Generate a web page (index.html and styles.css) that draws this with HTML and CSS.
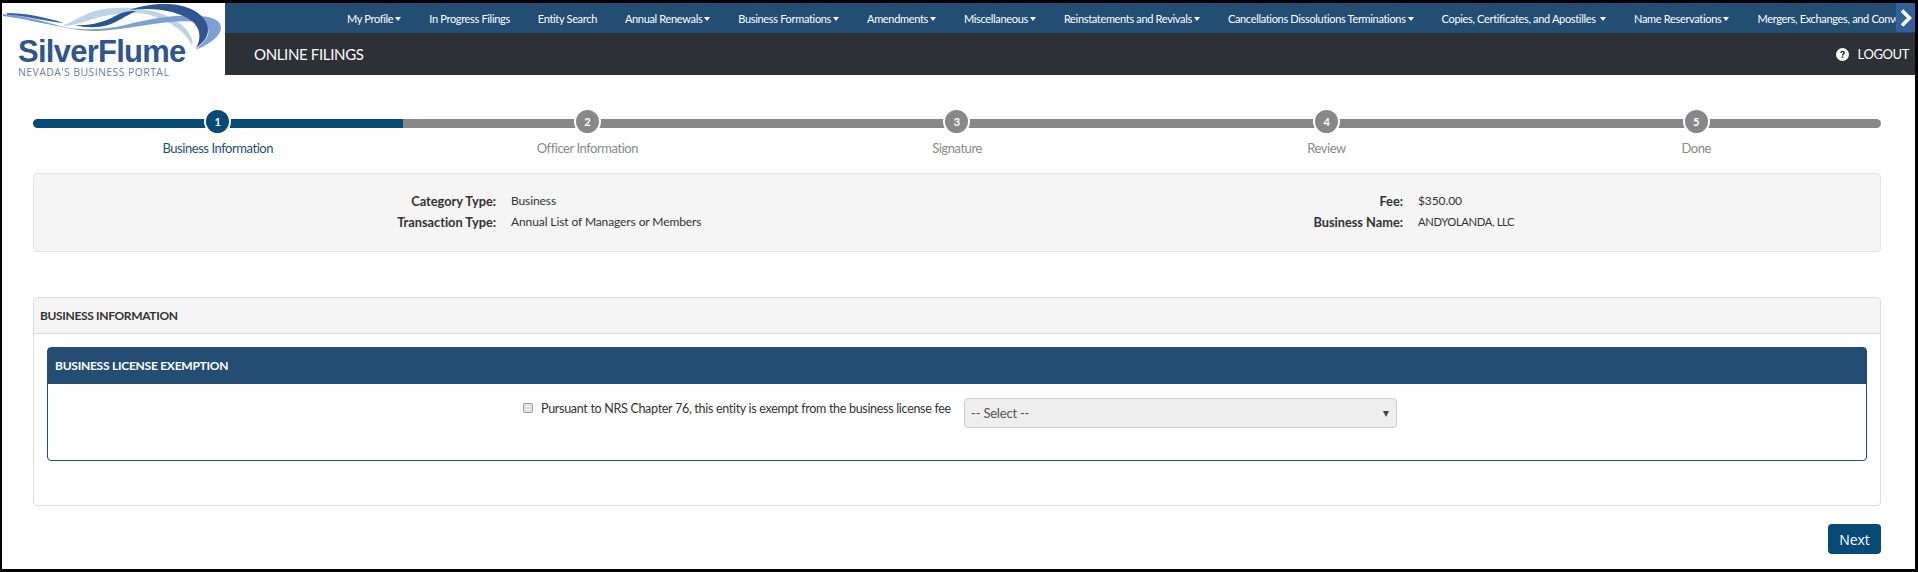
FILE: index.html
```html
<!DOCTYPE html>
<html lang="en">
<head>
<meta charset="utf-8">
<title>SilverFlume - Online Filings</title>
<link rel="stylesheet" href="styles.css">
</head>
<body>
<div class="page">
  <header class="top">
    <div class="logo">
      <svg class="swoosh" viewBox="2 3 223 50" width="223" height="50" aria-hidden="true">
        <path d="M62 26C78 20 88 9 115 8C140 6 170 12 185 28C191 35 194 41 192 46C186 32 172 22 150 15C130 10 115 14 100 17C88 20 75 26 62 26Z" fill="#bfd3e6"/>
        <path d="M3 14C20 15 40 20 60 26C75 30 100 31 125 25C150 19 175 14 200 16C215 17 224 22 220 32C216 40 205 46 195 50C205 42 210 35 208 29C205 22 190 20 170 22C140 25 115 31 95 31C70 31 45 22 3 16Z" fill="#7d9fd3"/>
        <path d="M7 13C25 13 45 17 64 23C50 22 25 16 7 14.5Z" fill="#3b629f"/>
        <path d="M75 25C90 26 105 22 115 16C122 12 128 11 136 11C125 16 118 22 108 25C98 28 85 28 75 25Z" fill="#2a5594"/>
        <path d="M130 10C145 4 165 3 178 5C195 8 208 18 208 30C208 37 203 43 196 48C202 38 200 28 192 21C178 11 155 7 130 10Z" fill="#2f5593"/>
      </svg>
      <div class="brand">SilverFlume</div>
      <div class="tagline">NEVADA'S BUSINESS PORTAL</div>
    </div>
    <div class="bars">
      <nav class="nav">
        <a>My Profile<i class="caret"></i></a>
        <a>In Progress Filings</a>
        <a>Entity Search</a>
        <a>Annual Renewals<i class="caret"></i></a>
        <a>Business Formations<i class="caret"></i></a>
        <a>Amendments<i class="caret"></i></a>
        <a>Miscellaneous<i class="caret"></i></a>
        <a>Reinstatements and Revivals<i class="caret"></i></a>
        <a>Cancellations Dissolutions Terminations<i class="caret"></i></a>
        <a>Copies, Certificates, and Apostilles <i class="caret"></i></a>
        <a>Name Reservations<i class="caret"></i></a>
        <a>Mergers, Exchanges, and Conversions<i class="caret"></i></a>
        <span class="more"><svg viewBox="0 0 12 18" width="12" height="18" aria-hidden="true"><path d="M2 1.5L9.5 9L2 16.5" fill="none" stroke="#fff" stroke-width="3.6"/></svg></span>
      </nav>
      <div class="subbar">
        <span class="title">ONLINE FILINGS</span>
        <span class="logout"><svg viewBox="0 0 14 14" width="13" height="13" aria-hidden="true"><circle cx="7" cy="7" r="7" fill="#fff"/><path d="M4.6 5.4C4.7 3.9 5.7 3 7.1 3C8.6 3 9.6 3.9 9.6 5.1C9.6 6.6 7.9 6.8 7.9 8.2H6.2C6.2 6.2 7.8 6 7.8 5.2C7.8 4.7 7.5 4.4 7 4.4C6.5 4.4 6.2 4.8 6.1 5.4Z" fill="#2d3035"/><rect x="6.2" y="9" width="1.7" height="1.7" fill="#2d3035"/></svg>LOGOUT</span>
      </div>
    </div>
  </header>

  <main class="main">
    <ol class="steps">
      <li class="step active"><span class="dot">1</span><span class="step-label">Business Information</span></li>
      <li class="step"><span class="dot">2</span><span class="step-label">Officer Information</span></li>
      <li class="step"><span class="dot">3</span><span class="step-label">Signature</span></li>
      <li class="step"><span class="dot">4</span><span class="step-label">Review</span></li>
      <li class="step"><span class="dot">5</span><span class="step-label">Done</span></li>
    </ol>

    <section class="summary">
      <div class="k">Category Type:</div><div class="v">Business</div>
      <div class="k">Fee:</div><div class="v">$350.00</div>
      <div class="k">Transaction Type:</div><div class="v">Annual List of Managers or Members</div>
      <div class="k">Business Name:</div><div class="v v-caps">ANDYOLANDA, LLC</div>
    </section>

    <section class="panel">
      <h2 class="panel-head">BUSINESS INFORMATION</h2>
      <div class="panel-body">
        <div class="inner">
          <h3 class="inner-head">BUSINESS LICENSE EXEMPTION</h3>
          <div class="inner-body">
            <label class="check"><input type="checkbox" class="box">Pursuant to NRS Chapter 76, this entity is exempt from the business license fee</label>
            <div class="select"><span>-- Select --</span><i class="arrow"></i></div>
          </div>
        </div>
      </div>
    </section>

    <div class="actions"><button class="next" type="button">Next</button></div>
  </main>
</div>
</body>
</html>
```
FILE: styles.css
```css
* { box-sizing: border-box; }
html, body { margin: 0; height: 100%; }
body { background: #000; padding: 3px 3px 3px 2px; font-family: "Lato", "Liberation Sans", sans-serif; font-size: 13px; color: #333; }
.page { background: #fff; height: 566px; overflow: hidden; }

.top { display: flex; height: 72px; }
.logo { position: relative; width: 223px; flex: none; background: #fff; }
.swoosh { position: absolute; left: 0; top: 0; }
.brand { position: absolute; left: 16px; top: 35px; font: bold 31px/28px "Liberation Sans", sans-serif; color: #2f5593; letter-spacing: -.75px; white-space: nowrap; }
.tagline { position: absolute; left: 16px; top: 64px; font: 10.5px/10px "Open Sans", sans-serif; color: #6d7f9a; letter-spacing: .4px; white-space: nowrap; }

.bars { flex: 1; min-width: 0; display: flex; flex-direction: column; }
.nav { position: relative; height: 30px; background: #234d73; display: flex; align-items: center; overflow: hidden; white-space: nowrap; padding-left: 108px; color: #fff; font-size: 11px; letter-spacing: -.33px; }
.nav a { flex: none; padding: 0 14px; }
.caret { display: inline-block; margin-left: 2px; width: 0; height: 0; border: 3.5px solid transparent; border-top: 4px solid #fff; border-bottom: 0; vertical-align: 2px; }
.more { position: absolute; right: 0; top: 0; width: 19px; height: 29px; background: #33609a; display: flex; align-items: center; justify-content: center; }
.subbar { flex: 1; background: #2d3035; color: #fff; display: flex; align-items: center; justify-content: space-between; padding: 0 6px 0 29px; }
.title { font-size: 15px; letter-spacing: -.35px; }
.logout { display: flex; align-items: center; gap: 9px; font-size: 13px; letter-spacing: -.4px; }

.main { padding: 0 34px 0 31px; }
.steps { list-style: none; margin: 35px 0 0; padding: 0; display: flex; height: 63px; }
.step { position: relative; flex: 1; display: flex; flex-direction: column; align-items: center; color: #8a8a8a; letter-spacing: -.45px; }
.step::before { content: ""; position: absolute; left: 0; right: 0; top: 9px; height: 9px; background: #888; }
.step:first-child::before { border-radius: 5px 0 0 5px; }
.step:last-child::before { border-radius: 0 5px 5px 0; }
.step.active { color: #1f4e79; }
.step.active::before { background: #064a76; }
.dot { position: relative; margin-top: -2px; width: 27px; height: 27px; border-radius: 50%; background: #888; border: 2px solid #fff; color: #fff; font-size: 11px; font-weight: 700; letter-spacing: 0; display: flex; align-items: center; justify-content: center; }
.active .dot { background: #064a76; }
.step-label { margin-top: 4px; line-height: 18px; }

.summary { height: 79px; background: #f5f5f5; border: 1px solid #e3e3e3; border-radius: 4px; padding: 16px 0 0; display: grid; grid-template-columns: 462px 445px 462px 1fr; grid-auto-rows: 21px; align-items: center; font-size: 12px; }
.k { text-align: right; font-weight: 700; font-size: 12.8px; letter-spacing: -.02px; }
.v { padding-left: 15px; letter-spacing: -.1px; }
.v-caps { font-size: 11.2px; letter-spacing: -.35px; }

.panel { margin-top: 45px; height: 209px; border: 1px solid #ddd; border-radius: 4px; }
.panel-head { margin: 0; height: 36px; padding: 0 6px; background: #f5f5f5; border-bottom: 1px solid #ddd; border-radius: 4px 4px 0 0; font-size: 12px; font-weight: 700; line-height: 35px; color: #333; letter-spacing: -.35px; }
.panel-body { padding: 13px 13px 0; }
.inner { height: 114px; border: 1px solid #234d73; border-radius: 4px; }
.inner-head { margin: 0; height: 36px; padding: 0 7px; background: #234d73; color: #fff; font-size: 12px; font-weight: 700; line-height: 35px; letter-spacing: -.25px; }
.inner-body { display: flex; align-items: flex-start; padding: 14px 0 0 475px; }
.check { display: flex; align-items: center; width: 441px; height: 20px; white-space: nowrap; font-size: 12.5px; letter-spacing: -.3px; }
.box { appearance: none; width: 10px; height: 10px; margin: 0 8px 0 0; border: 1px solid #999; border-radius: 2px; background: #e4e4e4; flex: none; }
.select { position: relative; width: 433px; height: 30px; background: #eee; border: 1px solid #ccc; border-radius: 4px; display: flex; align-items: center; padding-left: 6px; color: #555; letter-spacing: -.2px; }
.arrow { position: absolute; right: 7px; top: 12px; border: 3.5px solid transparent; border-top: 6px solid #444; border-bottom: 0; }

.actions { display: flex; justify-content: flex-end; margin-top: 18px; }
.next { width: 53px; height: 30px; background: #064a76; color: #fff; border: 0; border-radius: 4px; font: 14px "Open Sans", sans-serif; padding: 0; }
```
